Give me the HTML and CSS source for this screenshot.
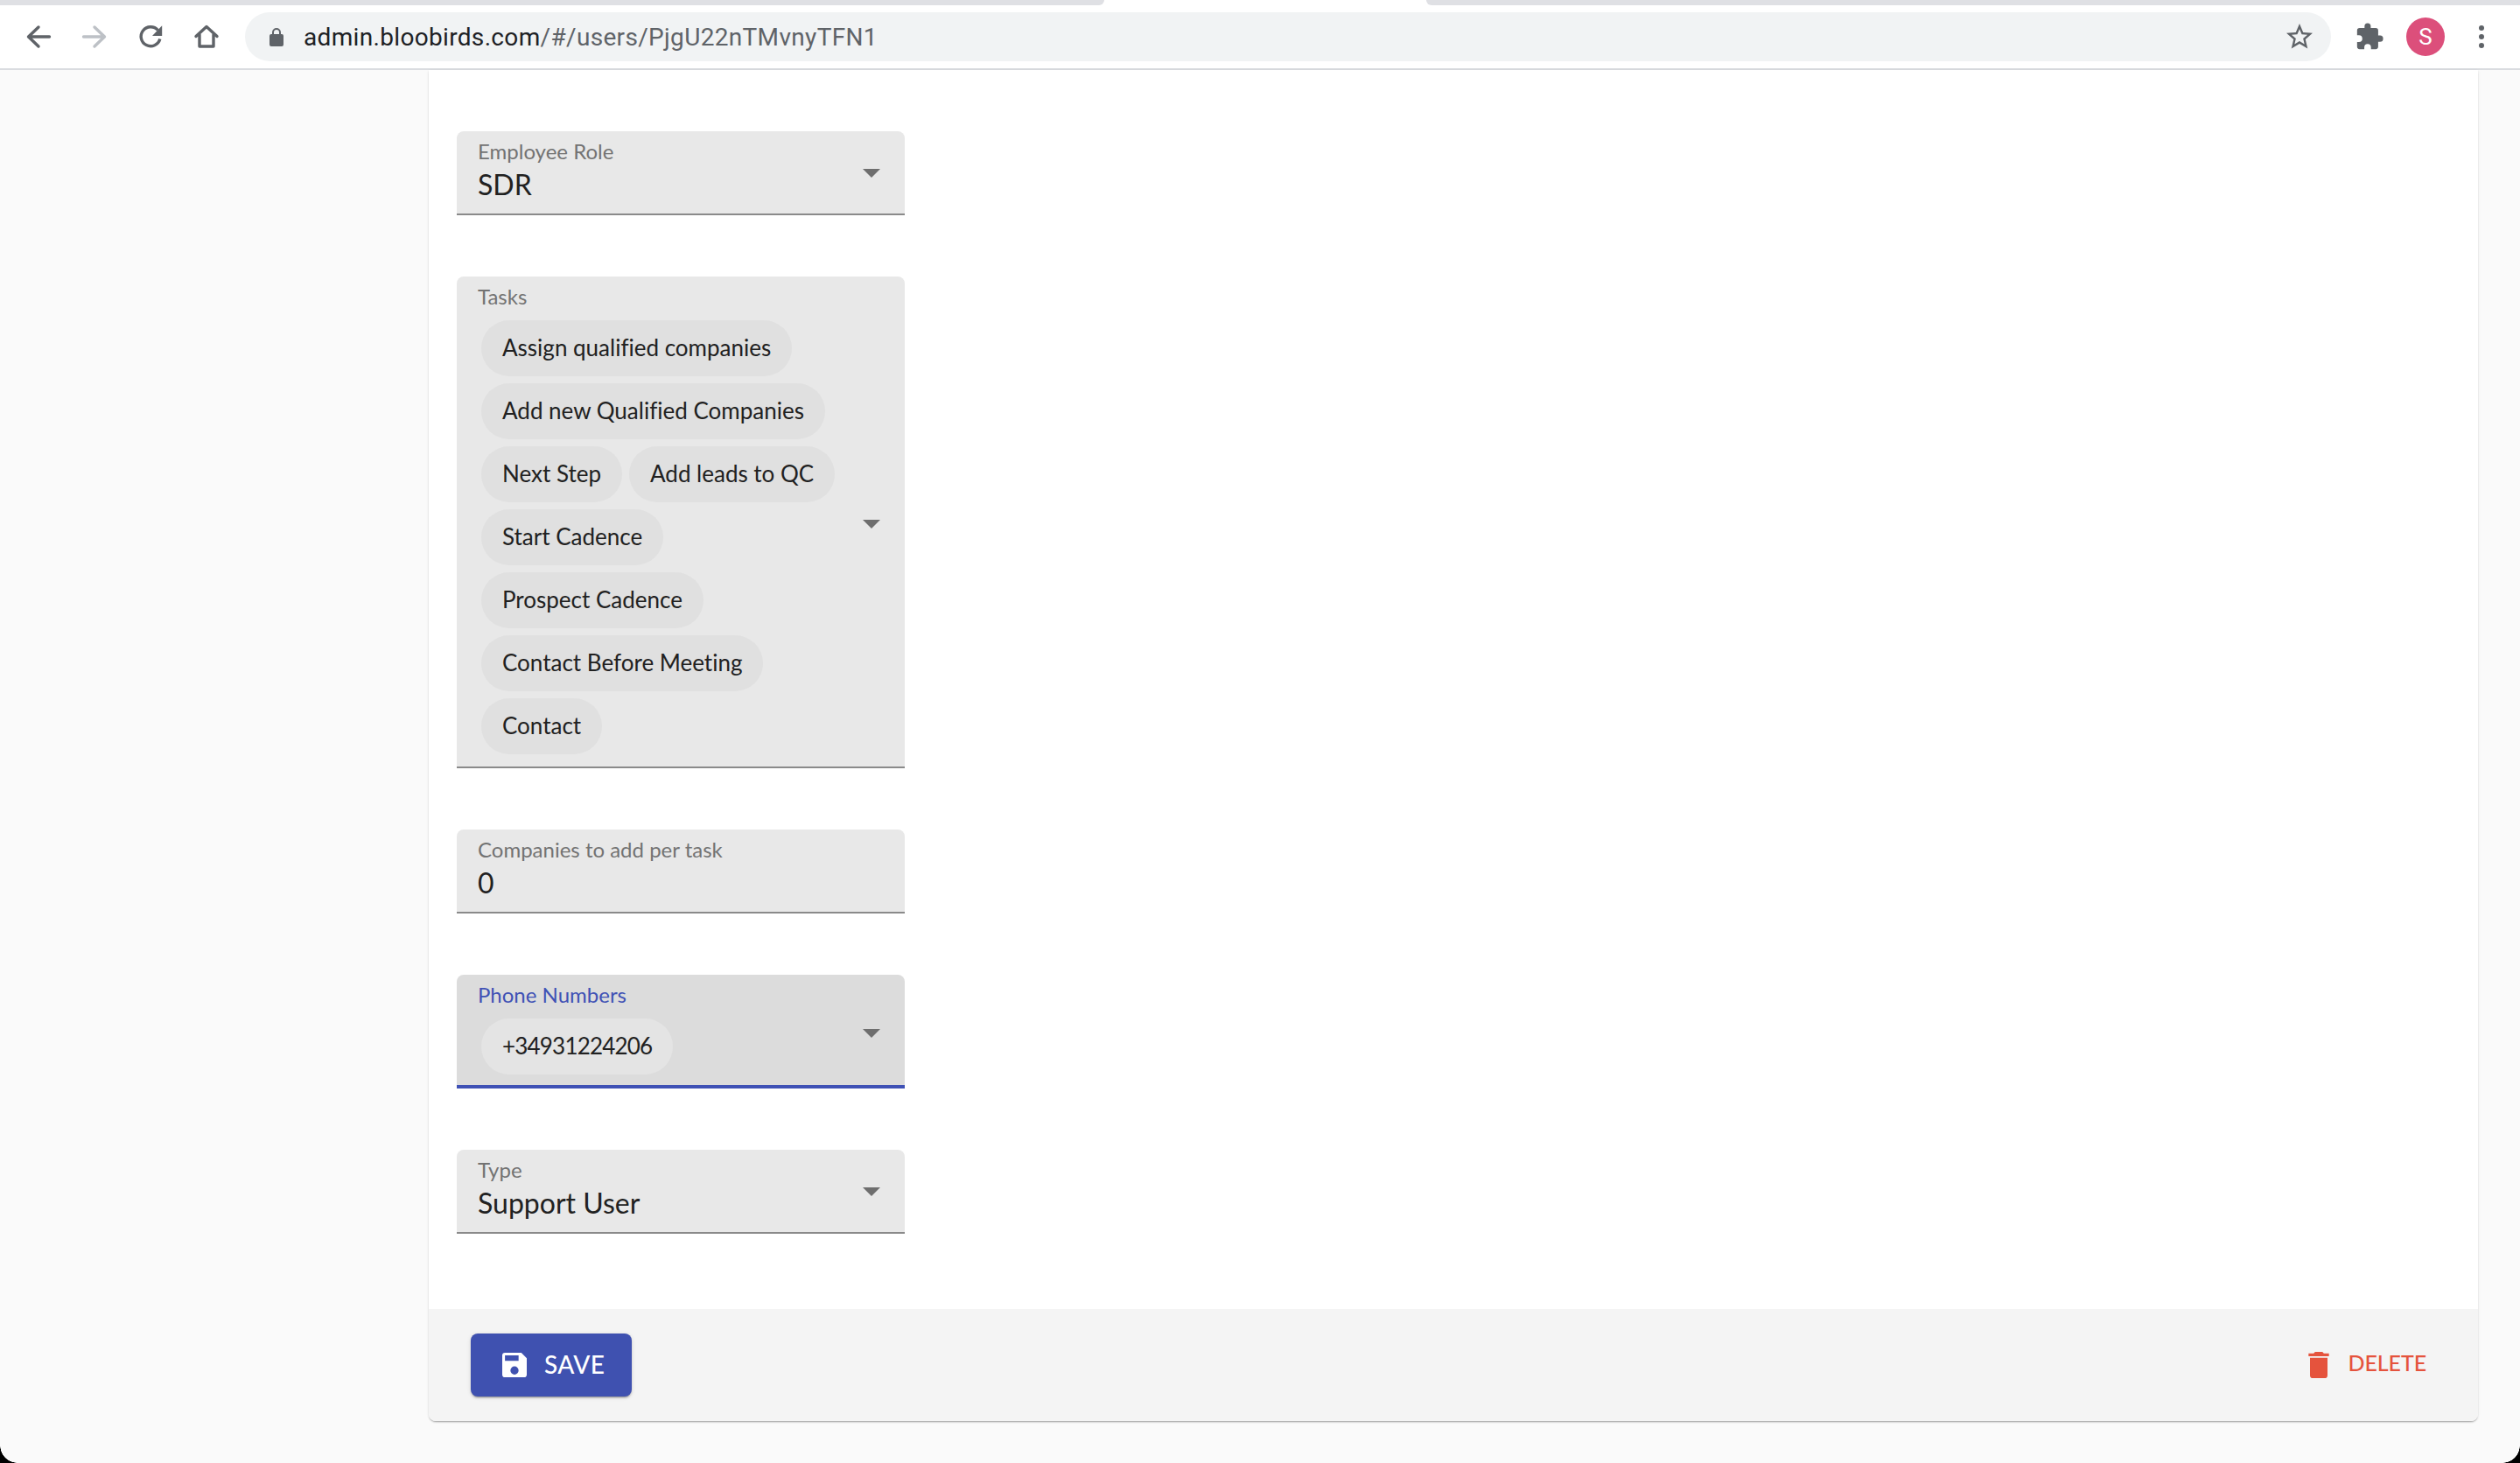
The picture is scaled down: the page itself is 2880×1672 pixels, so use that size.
FILE: index.html
```html
<!DOCTYPE html>
<html lang="en">
<head>
<meta charset="utf-8">
<title>Bloobirds admin</title>
<link rel="stylesheet" href="styles.css">
</head>
<body>
<div class="window">
  <div class="tabstrip">
    <div class="tab-off tab-left"></div>
    <div class="tab-on"></div>
    <div class="tab-off tab-right"></div>
  </div>
  <header class="toolbar">
    <div class="nav">
      <svg class="ticon line" viewBox="0 0 36 36"><path d="M30.5 18H7M18 7 6.5 18 18 29"/></svg>
      <svg class="ticon line off" viewBox="0 0 36 36"><path d="M5.5 18H29M18 7l11.5 11L18 29"/></svg>
      <svg class="ticon line" viewBox="0 0 36 36"><path class="butt" d="M26.5 10.5A11 11 0 1 0 28.8 20.5"/><path class="solid" d="M31.2 5.3V17H20z"/></svg>
      <svg class="ticon line" viewBox="0 0 36 36"><path d="M6 17.5 18 6.5l12 11M10 15.5V29h16V15.5"/></svg>
    </div>
    <div class="omnibox">
      <svg class="lock" viewBox="4 1 16 21"><path d="M18 8h-1V6A5 5 0 0 0 7 6v2H6a2 2 0 0 0-2 2v10a2 2 0 0 0 2 2h12a2 2 0 0 0 2-2V10a2 2 0 0 0-2-2zM9 6a3 3 0 0 1 6 0v2H9z"/></svg>
      <span class="url"><span class="host">admin.bloobirds.com</span>/#/users/PjgU22nTMvnyTFN1</span>
      <svg class="star" viewBox="0 0 24 24"><path d="M22 9.24l-7.19-.62L12 2 9.19 8.63 2 9.24l5.46 4.73L5.82 21 12 17.27 18.18 21l-1.63-7.03zM12 15.4l-3.76 2.27 1-4.28-3.32-2.88 4.38-.38L12 6.1l1.71 4.04 4.38.38-3.32 2.88 1 4.28z"/></svg>
    </div>
    <div class="actions">
      <svg class="ticon puzzle" viewBox="0 0 24 24"><path d="M20.5 11H19V7a2 2 0 0 0-2-2h-4V3.5a2.5 2.5 0 0 0-5 0V5H4a2 2 0 0 0-2 2v3.8h1.5a2.7 2.7 0 0 1 0 5.4H2V20a2 2 0 0 0 2 2h3.8v-1.5a2.7 2.7 0 0 1 5.4 0V22H17a2 2 0 0 0 2-2v-4h1.5a2.5 2.5 0 0 0 0-5z"/></svg>
      <div class="avatar">S</div>
      <div class="dots"><i></i><i></i><i></i></div>
    </div>
  </header>
  <div class="rule"></div>
  <main class="page">
    <section class="panel">
      <div class="form">
        <div class="field select">
          <div class="label">Employee Role</div>
          <div class="value">SDR</div>
          <span class="caret"></span>
        </div>
        <div class="field select multi">
          <div class="label">Tasks</div>
          <div class="chips">
            <span class="chip">Assign qualified companies</span>
            <span class="chip">Add new Qualified Companies</span>
            <span class="chip">Next Step</span>
            <span class="chip">Add leads to QC</span>
            <span class="chip">Start Cadence</span>
            <span class="chip">Prospect Cadence</span>
            <span class="chip">Contact Before Meeting</span>
            <span class="chip">Contact</span>
          </div>
          <span class="caret"></span>
        </div>
        <div class="field">
          <div class="label">Companies to add per task</div>
          <div class="value">0</div>
        </div>
        <div class="field select multi focused">
          <div class="label">Phone Numbers</div>
          <div class="chips">
            <span class="chip chip-num">+34931224206</span>
          </div>
          <span class="caret"></span>
        </div>
        <div class="field select">
          <div class="label">Type</div>
          <div class="value">Support User</div>
          <span class="caret"></span>
        </div>
      </div>
      <footer class="panel-foot">
        <button class="save" type="button">
          <svg class="save-icon" viewBox="3 3 18 18"><path d="M17 3H5a2 2 0 0 0-2 2v14a2 2 0 0 0 2 2h14a2 2 0 0 0 2-2V7zm-5 16a3 3 0 1 1 0-6 3 3 0 0 1 0 6zm3-10H5V5h10z"/></svg>
          <span class="btn-text">SAVE</span>
        </button>
        <button class="delete" type="button">
          <svg class="delete-icon" viewBox="5 3 14 18"><path d="M6 19a2 2 0 0 0 2 2h8a2 2 0 0 0 2-2V7H6zM19 4h-3.5l-1-1h-5l-1 1H5v2h14z"/></svg>
          <span class="btn-text del-text">DELETE</span>
        </button>
      </footer>
    </section>
  </main>
  <div class="corner corner-l"></div>
  <div class="corner corner-r"></div>
</div>
</body>
</html>
```

FILE: styles.css
```css
* { box-sizing: border-box; }
html, body { margin: 0; padding: 0; }
body { background: #000; font-family: "Lato", "Open Sans", sans-serif; font-variant-ligatures: none; }

.window {
  position: relative;
  width: 2880px;
  height: 1672px;
  overflow: hidden;
  display: flex;
  flex-direction: column;
  background: #fafafa;
}

.tabstrip {
  height: 14px;
  display: flex;
  background: #fff;
  flex: none;
}
.tab-off { height: 6px; background: #dfe0e4; }
.tab-left { width: 1262px; border-radius: 0 0 12px 0; }
.tab-on { width: 368px; }
.tab-right { flex: 1; border-radius: 0 0 0 12px; }

.toolbar {
  height: 64px;
  flex: none;
  background: #fff;
  display: flex;
  align-items: flex-start;
}
.nav {
  width: 280px;
  height: 56px;
  flex: none;
  display: flex;
  align-items: center;
  gap: 28px;
  padding-left: 26px;
}
.ticon { width: 36px; height: 36px; fill: #5f6368; flex: none; }
.ticon.line { fill: none; stroke: #5f6368; stroke-width: 3.4; stroke-linecap: round; stroke-linejoin: round; }
.ticon.off { stroke: #bdc1c6; }
.ticon .butt { stroke-linecap: butt; }
.ticon .solid { fill: #5f6368; stroke: none; }

.omnibox {
  width: 2384px;
  height: 56px;
  flex: none;
  background: #f1f3f4;
  border-radius: 28px;
  display: flex;
  align-items: center;
  padding: 0 18px 0 28px;
}
.lock { width: 16px; height: 21px; fill: #5f6368; flex: none; }
.url {
  margin-left: 23px;
  flex: 1;
  font-family: "Roboto", sans-serif;
  font-size: 28px;
  letter-spacing: 0.33px;
  color: #5f6368;
}
.host { color: #202124; }
.star { width: 36px; height: 36px; fill: #5f6368; flex: none; }

.actions {
  flex: 1;
  height: 56px;
  display: flex;
  align-items: center;
  padding-left: 27px;
}
.ticon.puzzle { width: 34px; height: 34px; }
.avatar {
  width: 44px;
  height: 44px;
  margin-left: 25px;
  border-radius: 50%;
  background: #dc4f7b;
  color: #fff;
  font-family: "Roboto", sans-serif;
  font-size: 26px;
  display: flex;
  align-items: center;
  justify-content: center;
  flex: none;
}
.dots {
  margin-left: 39px;
  display: flex;
  flex-direction: column;
  gap: 4px;
  flex: none;
}
.dots i { display: block; width: 6px; height: 6px; border-radius: 50%; background: #5f6368; }

.rule { height: 2px; background: #dadce0; flex: none; }

.page {
  flex: 1;
  padding: 0 48px 48px 490px;
  display: flex;
  min-height: 0;
}
.panel {
  flex: 1;
  display: flex;
  flex-direction: column;
  justify-content: space-between;
  background: #fff;
  border-radius: 0 0 8px 8px;
  box-shadow: 0 2px 2px -1px rgba(0,0,0,.3), 0 1px 3px 0 rgba(0,0,0,.12);
}

.form {
  display: flex;
  flex-direction: column;
  align-items: flex-start;
  gap: 70px;
  padding: 70px 0 0 32px;
}
.field {
  position: relative;
  width: 512px;
  min-height: 96px;
  background: #e8e8e8;
  border-radius: 8px 8px 0 0;
  border-bottom: 2px solid #8a8a8a;
  padding: 8px 24px 0;
}
.field.multi { padding: 8px 56px 14px 24px; }
.field.focused {
  background: #dcdcdc;
  border-bottom: 4px solid #3f51b5;
  padding-bottom: 12px;
}
.label {
  font-size: 24px;
  line-height: 30px;
  color: #737373;
}
.focused .label { color: #3f51b5; }
.value {
  font-size: 32px;
  line-height: 40px;
  margin-top: 3px;
  color: #212121;
}
.chips {
  display: flex;
  flex-wrap: wrap;
  gap: 8px;
  margin-left: 4px;
  margin-top: 12px;
}
.chip {
  height: 64px;
  padding: 0 24px;
  border-radius: 32px;
  background: #e0e0e0;
  color: #212121;
  font-size: 26px;
  line-height: 62px;
  white-space: nowrap;
}
.focused .chip { background: #e4e4e4; }
.chip-num { letter-spacing: -0.8px; }
.caret {
  position: absolute;
  right: 28px;
  top: 50%;
  margin-top: -4px;
  width: 0;
  height: 0;
  border-left: 10px solid transparent;
  border-right: 10px solid transparent;
  border-top: 10px solid #6e6e6e;
}
.multi .caret { margin-top: -2px; }
.focused .caret { margin-top: -1px; }

.panel-foot {
  height: 128px;
  flex: none;
  background: #f4f4f4;
  border-radius: 0 0 8px 8px;
  display: flex;
  align-items: center;
  justify-content: space-between;
  padding: 0 59px 0 48px;
}
.save {
  width: 184px;
  height: 72px;
  border: 0;
  border-radius: 8px;
  background: #3f51b0;
  color: #fff;
  font: 500 28px "Lato", sans-serif;
  letter-spacing: 0.4px;
  display: flex;
  align-items: center;
  gap: 20px;
  padding: 0 0 0 36px;
  box-shadow: 0 3px 1px -2px rgba(0,0,0,.2), 0 2px 2px 0 rgba(0,0,0,.14), 0 1px 5px 0 rgba(0,0,0,.12);
}
.save-icon { width: 28px; height: 28px; fill: #fff; flex: none; }
.delete {
  border: 0;
  background: none;
  color: #e5533d;
  font: 500 25px "Lato", sans-serif;
  letter-spacing: -0.1px;
  display: flex;
  align-items: center;
  gap: 22px;
  padding: 0;
}
.delete-icon { width: 24px; height: 30px; fill: #e5533d; flex: none; }
.btn-text { padding-bottom: 3px; }
.del-text { padding-bottom: 6px; }

.corner {
  position: absolute;
  bottom: 0;
  width: 20px;
  height: 20px;
  background: radial-gradient(circle at var(--cx) 0, transparent 19.5px, #000 20px);
}
.corner-l { left: 0; --cx: 100%; }
.corner-r { right: 0; --cx: 0; }
```
